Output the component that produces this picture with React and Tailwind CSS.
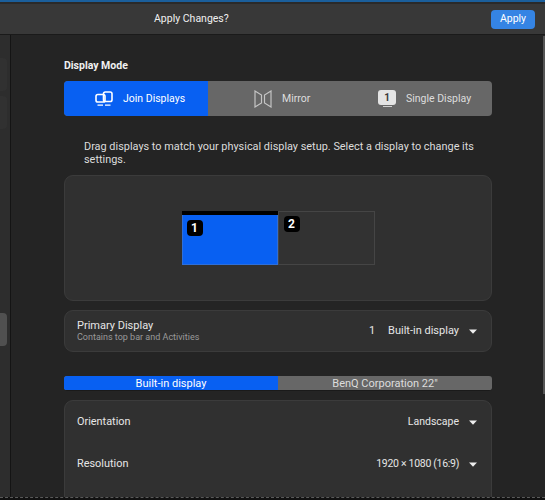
import React from "react";

const font = { fontFamily: 'Roboto, "Noto Sans", sans-serif' };

function Caret() {
  return (
    <svg width="8" height="5" viewBox="0 0 8 5" className="shrink-0">
      <path d="M0 0.5h8L4 4.8z" fill="#eeeeee" />
    </svg>
  );
}

function JoinIcon() {
  return (
    <svg width="18" height="16" viewBox="0 0 18 16" fill="none" stroke="#ffffff" strokeWidth="1.6">
      <rect x="1" y="3.5" width="9" height="7.5" rx="1.8" />
      <rect x="8.5" y="1" width="8.5" height="9.5" rx="1.8" />
      <path d="M2.5 14.2h5.5M10 14.2h5.5" strokeWidth="1.2" />
    </svg>
  );
}

function MirrorIcon() {
  return (
    <svg width="18" height="18" viewBox="0 0 18 18" fill="none" stroke="#c4c4c4" strokeWidth="1.2">
      <path d="M1 1l6.5 4v8L1 17z" />
      <path d="M17 1l-6.5 4v8l6.5 4z" />
    </svg>
  );
}

function SingleIcon() {
  return (
    <div className="flex flex-col items-center">
      <div className="flex h-[15px] w-[18px] items-center justify-center rounded-[3px] bg-[#e4e4e4] text-[10px] font-bold leading-none text-[#3a3a3a]">
        1
      </div>
      <div className="mt-[1px] h-[1px] w-[9px] bg-[#d0d0d0]" />
    </div>
  );
}

function Row({ label, value, valueClass }) {
  return (
    <div className="flex h-[42px] items-center justify-between">
      <span className="text-[10.9px]">{label}</span>
      <span className="flex items-center gap-[10px]">
        <span className={valueClass}>{value}</span>
        <Caret />
      </span>
    </div>
  );
}

export default function App() {
  return (
    <div
      className="relative flex h-[500px] w-[545px] flex-col overflow-hidden bg-[#242424] text-[10.5px] text-[#e6e6e6]"
      style={font}
    >
      <div className="h-[2px] shrink-0 bg-[#1b5f9c]" />
      <div className="h-[2px] shrink-0 bg-[#2a2a2a]" />
      <header className="flex h-[31px] shrink-0 items-center justify-between border-b border-[#1a1a1a] bg-[#383838] pl-[154px] pr-[10px]">
        <span className="text-[#f0f0f0]">Apply Changes?</span>
        <button className="flex h-[19px] w-[44px] items-center justify-center rounded-[4px] bg-[#3584e4] text-white">
          Apply
        </button>
      </header>

      <div className="flex min-h-0 flex-1">
        <aside className="flex w-[11px] shrink-0 flex-col gap-[5px] border-r border-[#141414] bg-[#2d2d2d] pt-[23px]">
          <div className="h-[33px] w-[7px] rounded-r-[4px] bg-[#313131]" />
          <div className="h-[33px] w-[7px] rounded-r-[4px] bg-[#313131]" />
          <div className="mt-[179px] h-[33px] w-[7px] rounded-r-[4px] bg-[#505050]" />
        </aside>

        <main className="min-w-0 flex-1 pl-[53px] pr-[53px] pt-[24px]">
          <h2 className="font-bold leading-[14px] text-[#f0f0f0]">Display Mode</h2>

          <div className="mt-[8px] flex h-[35px] overflow-hidden rounded-[4px] bg-[#676767]">
            <div className="flex w-[144px] items-center gap-[10px] bg-[#0860f2] pl-[31px] text-white">
              <JoinIcon />
              <span className="mt-[1px]">Join Displays</span>
            </div>
            <div className="flex w-[136px] items-center gap-[10px] pl-[46px] text-[#dddddd]">
              <MirrorIcon />
              <span className="mt-[1px]">Mirror</span>
            </div>
            <div className="flex flex-1 items-center gap-[10px] pl-[34px] text-[#dddddd]">
              <SingleIcon />
              <span className="mt-[1px]">Single Display</span>
            </div>
          </div>

          <p className="mt-[24px] pl-[20px] text-[10.9px] leading-[13px] text-[#dcdcdc]">
            Drag displays to match your physical display setup. Select a display to change its settings.
          </p>

          <section className="mt-[9px] flex h-[126px] items-center justify-center rounded-[9px] border border-[#3b3b3b] bg-[#303030]">
            <div className="flex">
              <div className="h-[54px] w-[96px] border border-[#2f6fd8] border-t-0 bg-[#0860f2]">
                <div className="-mx-[1px] h-[4px] bg-black" />
                <div className="ml-[4px] mt-[5px] flex h-[16px] w-[16px] items-center justify-center rounded-[4px] bg-black text-[12px] font-bold leading-none text-white">
                  1
                </div>
              </div>
              <div className="h-[54px] w-[97px] border border-[#454545] bg-[#323232]">
                <div className="ml-[5px] mt-[4px] flex h-[16px] w-[16px] items-center justify-center rounded-[4px] bg-black text-[12px] font-bold leading-none text-white">
                  2
                </div>
              </div>
            </div>
          </section>

          <section className="mt-[9px] flex h-[42px] items-center justify-between rounded-[9px] border border-[#3b3b3b] bg-[#303030] pl-[12px] pr-[14px] text-[11px]">
            <div>
              <div className="leading-[13px]">Primary Display</div>
              <div className="text-[9px] leading-[11px] text-[#9a9a9a]">Contains top bar and Activities</div>
            </div>
            <span className="flex items-center gap-[10px]">
              <span className="mr-[3px]">1</span>
              Built-in display
              <Caret />
            </span>
          </section>

          <div className="mt-[24px] flex h-[15px] overflow-hidden rounded-[3px] border-b border-[#1a1a1a] bg-[#676767] text-[11px] leading-[15px]">
            <div className="w-[214px] bg-[#0860f2] text-center text-white">Built-in display</div>
            <div className="flex-1 text-center text-[#dddddd]">BenQ Corporation 22"</div>
          </div>

          <section className="mt-[9px] h-[140px] rounded-[9px] border border-[#3b3b3b] bg-[#303030] pl-[12px] pr-[14px]">
            <Row label="Orientation" value="Landscape" />
            <Row label="Resolution" value="1920 × 1080 (16:9)" valueClass="tracking-[-0.3px]" />
          </section>
        </main>
      </div>

      {/* scrollbar and the dashed edge sit over the page */}
      <div className="absolute right-0 top-[36px] h-[358px] w-[2px] bg-[#555555]" />
      <div className="absolute inset-x-0 bottom-0 h-[3px] border-t border-dashed border-[#5a5a5a] bg-[#111111]" />
    </div>
  );
}
